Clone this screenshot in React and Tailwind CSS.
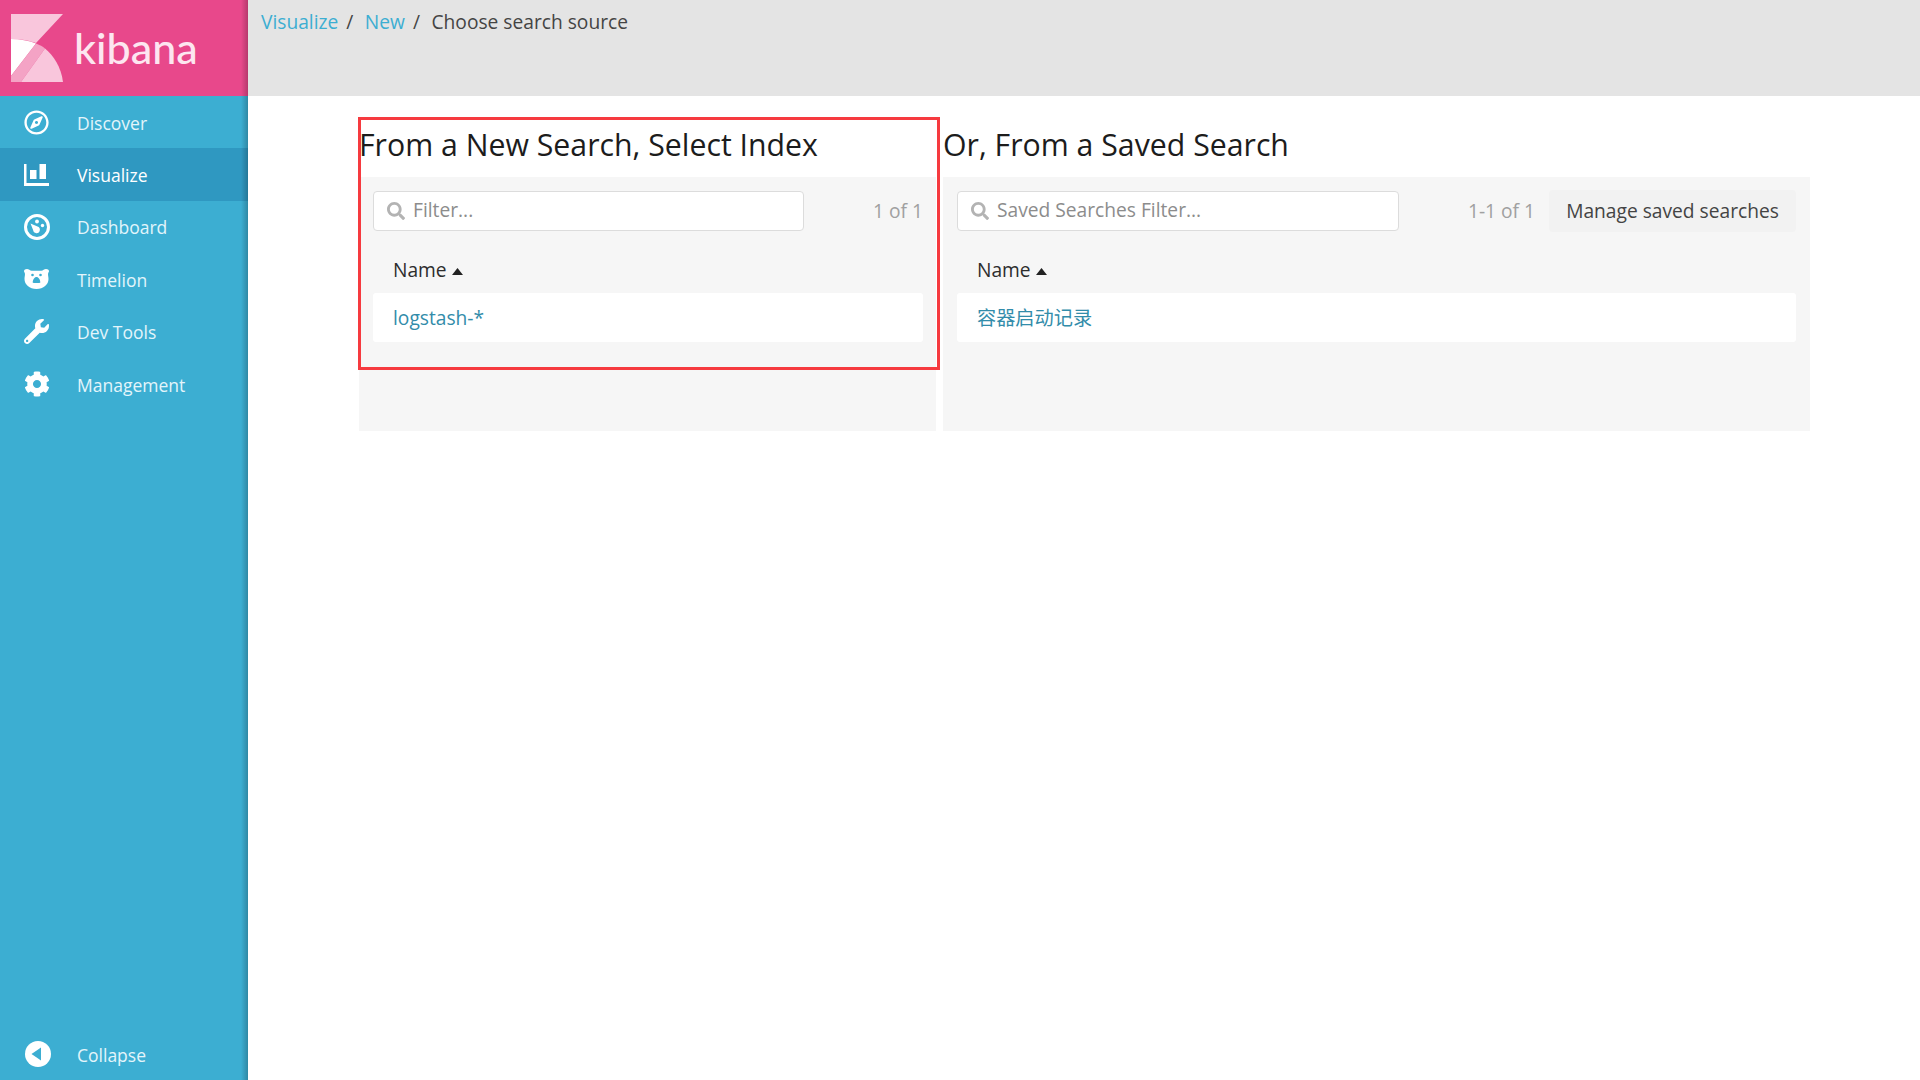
import { FaRegCompass, FaWrench, FaCog, FaSearch } from "react-icons/fa";

const font = { sans: "font-['Open_Sans','Noto_Sans_CJK_SC',sans-serif]" };

// Kibana mark
function Logo() {
  return (
    <svg width="52" height="68" viewBox="0 0 52 68" className="shrink-0">
      <path d="M0 0H52L25 29C18 26.5 9 25 0 25Z" fill="#f9c6dc" />
      <path d="M0 25C9 25 18 26.5 25 29.5L0 62Z" fill="#ffffff" />
      <path d="M25 29.5C29 31 31.5 32.5 34 34.5L10 68H0V62Z" fill="#f4a3c5" />
      <path d="M34 34.5C43 42 50 53 52 68H10Z" fill="#f9c6dc" />
    </svg>
  );
}

function BarsIcon() {
  return (
    <svg width="25" height="22" viewBox="0 0 25 22" fill="#fff">
      <path d="M0 0H2.5V19H25V22H0Z" />
      <rect x="6" y="6" width="6.5" height="9" />
      <rect x="15.5" y="0" width="6.5" height="15" />
    </svg>
  );
}

function GaugeIcon() {
  return (
    <svg width="26" height="26" viewBox="0 0 26 26" fill="#fff">
      <path
        fillRule="evenodd"
        d="M13 0a13 13 0 1 1 0 26a13 13 0 0 1 0-26Zm0 3a10 10 0 1 0 0 20a10 10 0 0 0 0-20Z"
      />
      <path d="M6.5 9.5L13.5 12.5a3.4 3.4 0 1 1-4.4 3.6Z" />
      <circle cx="13" cy="7.5" r="1.9" />
      <circle cx="18.5" cy="11.5" r="1.7" />
    </svg>
  );
}

function BearIcon() {
  return (
    <svg width="25" height="20" viewBox="0 0 25 20">
      <path
        fill="#fff"
        d="M0 2C0 .8 1.5 0 3 0c1.500 0 2.500.8 3.500 1.600C8 2 10 1.800 12.500 1.800s4.500.2 6-.2C19.500.8 20.500 0 22 0c1.500 0 3 .8 3 2 0 1-.7 1.600-.9 2.500-.3 1.500.4 3 .4 5.500 0 5.500-5 10-12 10S.5 15.500.5 10c0-2.500.7-4 .4-5.500C.7 3.600 0 3 0 2Z"
      />
      <circle cx="8.500" cy="6" r="1.300" fill="#3caed2" />
      <circle cx="16.500" cy="6" r="1.300" fill="#3caed2" />
      <path fill="#3caed2" d="M12.500 8c2 0 3.800 2.500 3.800 5.500 0 .8-7.600.8-7.600 0C8.700 10.500 10.500 8 12.500 8Z" />
    </svg>
  );
}

function CollapseIcon() {
  return (
    <svg width="26" height="26" viewBox="0 0 26 26">
      <circle cx="13" cy="13" r="13" fill="#fff" />
      <path d="M6.500 13L16 6.500V19.500Z" fill="#3caed2" />
    </svg>
  );
}

const navItems = [
  { label: "Discover", icon: <FaRegCompass size={25} color="#fff" /> },
  { label: "Visualize", icon: <BarsIcon />, active: true },
  { label: "Dashboard", icon: <GaugeIcon /> },
  { label: "Timelion", icon: <BearIcon /> },
  { label: "Dev Tools", icon: <FaWrench size={25} color="#fff" /> },
  { label: "Management", icon: <FaCog size={26} color="#fff" /> },
];

function NavRow({ label, icon, active }) {
  return (
    <div className={`flex items-center h-[52.4px] ${active ? "bg-[#2f98c1] text-white" : "text-[#e3f5fb]"}`}>
      <div className="w-[77px] pl-[24px] shrink-0 flex items-center">{icon}</div>
      <span className="text-[17.500px] mt-[1px]">{label}</span>
    </div>
  );
}

function SearchBox({ placeholder, width }) {
  return (
    <div className={`flex items-center h-[40px] ${width} bg-white border border-[#dcdcdc] rounded-[4px] pl-[13px]`}>
      <FaSearch size={18} color="#b3b3b3" className="shrink-0" />
      <input
        readOnly
        placeholder={placeholder}
        className="ml-[8px] flex-1 min-w-0 bg-transparent outline-none text-[19.200px] placeholder:text-[#8c8c8c] mt-[-2px]"
      />
    </div>
  );
}

function NameHeader() {
  return (
    <div className="flex items-center h-[46px] mt-[16px] pl-[20px] text-[19.200px] text-[#2d2d2d]">
      Name
      <svg width="11" height="7" viewBox="0 0 11 7" className="ml-[5px] mt-[2px]">
        <path d="M5.500 0L11 7H0Z" fill="#222" />
      </svg>
    </div>
  );
}

function Row({ children }) {
  return (
    <div className="flex items-center h-[49px] pl-[20px] pt-[1px] bg-white rounded-[3px] text-[19.200px] text-[#328caa]">
      {children}
    </div>
  );
}

export default function App() {
  return (
    <div className={`flex h-screen overflow-hidden bg-white ${font.sans}`}>
      <aside className="relative w-[248px] shrink-0 flex flex-col bg-[#3caed2]">
        <div className="flex items-center h-[96px] bg-[#e8488b] pl-[11px]">
          <Logo />
          <span className="ml-[11px] text-[43px] leading-none font-medium text-[#fde6f0] font-['Lato',sans-serif] mt-[-2px]">kibana</span>
        </div>
        {navItems.map(item => (
          <NavRow key={item.label} {...item} />
        ))}
        <div className="mt-auto flex items-center h-[52px] text-[#e3f5fb]">
          <div className="w-[77px] pl-[25px] shrink-0 flex items-center"><CollapseIcon /></div>
          <span className="text-[17.500px] mt-[3px]">Collapse</span>
        </div>
        <div className="absolute top-0 bottom-0 right-0 w-[7px] bg-gradient-to-r from-transparent to-[#00000038] pointer-events-none" />
      </aside>

      <main className="flex-1 min-w-0 flex flex-col">
        <div className="h-[96px] shrink-0 bg-[#e4e4e4] pl-[13px] pt-[9px] text-[19.200px] text-[#444]">
          <div className="flex items-center h-[26px]">
            <span className="text-[#3caed2]">Visualize</span>
            <span className="mx-[8px]">/</span>
            <span className="text-[#3caed2] ml-[3.500px]">New</span>
            <span className="mx-[8px]">/</span>
            <span className="ml-[3.500px]">Choose search source</span>
          </div>
        </div>

        <div className="flex gap-[7px] pl-[111px]">
          <section className="relative w-[577px] shrink-0">
            <h1 className="h-[65px] mt-[16px] flex items-center text-[30.250px] font-normal text-[#1c1c1c] whitespace-nowrap">
              From a New Search, Select Index
            </h1>
            <div className="h-[254px] bg-[#f6f6f6] pl-[14px] pr-[13px] pt-[14px]">
              <div className="flex items-center justify-between h-[40px]">
                <SearchBox placeholder="Filter..." width="w-[431px]" />
                <span className="text-[19.200px] text-[#a0a0a0]">1 of 1</span>
              </div>
              <NameHeader />
              <Row>logstash-*</Row>
            </div>
            {/* annotation box drawn over the screenshot */}
            <div className="absolute left-[-1px] top-[21px] w-[582px] h-[253px] border-[3px] border-[#f63a3f] pointer-events-none" />
          </section>

          <section className="w-[867px] shrink-0">
            <h1 className="h-[65px] mt-[16px] flex items-center text-[30.250px] font-normal text-[#1c1c1c] whitespace-nowrap">
              Or, From a Saved Search
            </h1>
            <div className="h-[254px] bg-[#f6f6f6] px-[14px] pt-[14px]">
              <div className="flex items-center h-[40px]">
                <SearchBox placeholder="Saved Searches Filter..." width="w-[442px]" />
                <span className="ml-auto text-[19.200px] text-[#a0a0a0]">1-1 of 1</span>
                <button className="ml-[14px] h-[42px] w-[247px] bg-[#f2f2f2] rounded-[4px] text-[19.200px] text-[#444]">
                  Manage saved searches
                </button>
              </div>
              <NameHeader />
              <Row>容器启动记录</Row>
            </div>
          </section>
        </div>
      </main>
    </div>
  );
}
